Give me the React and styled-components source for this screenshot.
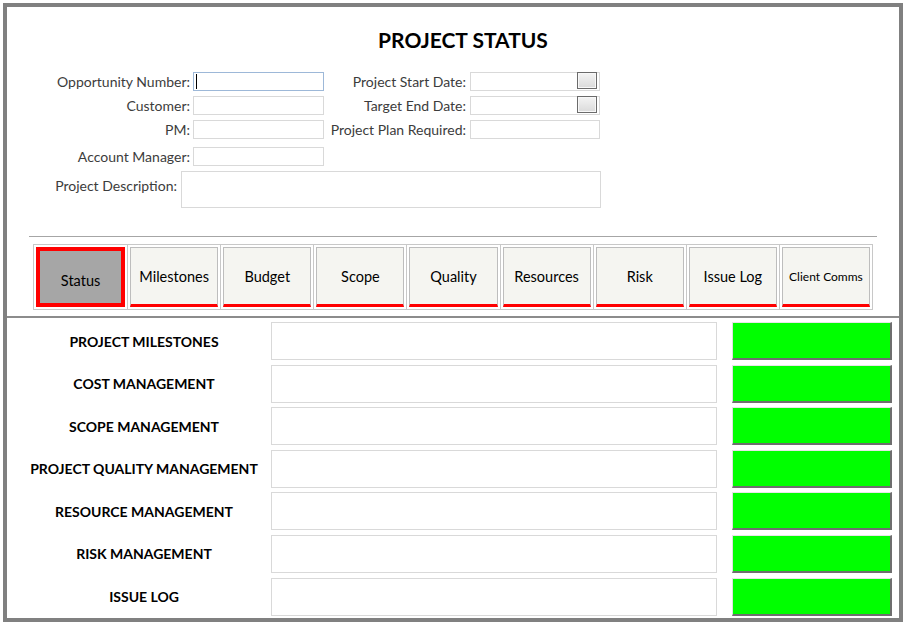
import React from "react";
import styled, { createGlobalStyle } from "styled-components";

const Global = createGlobalStyle`
  html, body { margin: 0; padding: 0; background: #ffffff; }
  body { font-family: "Lato", "Liberation Sans", sans-serif; }
  * { box-sizing: border-box; }
`;

const Frame = styled.div`
  margin: 3px;
  width: 900px;
  height: 619px;
  border: 4px solid #808080;
  background: #fff;
  display: flex;
  flex-direction: column;
`;

const Title = styled.h1`
  margin: 20px 0 0 20px;
  font-size: 21px;
  line-height: 26px;
  font-weight: 700;
  text-align: center;
  color: #000;
`;

const FormGrid = styled.div`
  margin-top: 19px;
  display: grid;
  grid-template-columns: 186px 131px 146px 130px;
  grid-template-rows: 19px 19px 19px 22px;
  row-gap: 5px;
  align-items: end;
`;

const Label = styled.div`
  font-size: 14px;
  color: #3c3c3c;
  text-align: right;
  padding-right: ${(p) => p.$pr || 3}px;
  line-height: 19px;
  height: 19px;
  white-space: nowrap;
`;

const Field = styled.div`
  height: 19px;
  border: 1px solid ${(p) => (p.$focus ? "#9db8d8" : "#d9d9d9")};
  background: #fff;
  display: flex;
  align-items: center;
  justify-content: ${(p) => (p.$picker ? "flex-end" : "flex-start")};
  padding: 0 1px;
`;

const Caret = styled.span`
  width: 1px;
  height: 15px;
  background: #000;
  margin-left: 1px;
`;

const PickerButton = styled.span`
  width: 20px;
  height: 17px;
  margin-top: -1px;
  align-self: flex-start;
  border: 1px solid #6b6b6b;
  box-shadow: inset 0 0 0 1px #f8f8f8;
  background: linear-gradient(#f4f4f4, #dadada);
  margin-right: 1px;
`;

const DescRow = styled.div`
  margin-top: 5px;
  display: flex;
  gap: 4px;
`;

const DescLabel = styled.div`
  width: 170px;
  font-size: 14px;
  color: #3c3c3c;
  text-align: right;
  padding-top: 5px;
  line-height: 19px;
  white-space: nowrap;
`;

const DescBox = styled.div`
  width: 420px;
  height: 37px;
  border: 1px solid #d9d9d9;
`;

const Rule = styled.hr`
  margin: 28px 22px 0;
  border: 0;
  height: 1px;
  background: #a6a6a6;
`;

const TabStrip = styled.div`
  margin: 7px 26px 0;
  border: 1px solid #c8c8c8;
  display: grid;
  grid-template-columns: repeat(9, 1fr);
`;

const TabCell = styled.div`
  padding: 2px;
  border-left: ${(p) => (p.$first ? "none" : "1px solid #c8c8c8")};
`;

const Tab = styled.div`
  height: 60px;
  display: flex;
  align-items: center;
  justify-content: center;
  font-size: ${(p) => (p.$small ? "12px" : "14.5px")};
  color: #000;
  white-space: nowrap;
  background: ${(p) => (p.$active ? "#a6a6a6" : "#f5f5f1")};
  border: ${(p) => (p.$active ? "4px solid #ff0000" : "1px solid #bdbdbd")};
  border-bottom: ${(p) => (p.$active ? "4px solid #ff0000" : "3px solid #ff0000")};
  padding-top: ${(p) => (p.$active ? "6px" : "0")};
`;

const Divider = styled.div`
  margin-top: 6px;
  height: 2px;
  background: #8c8c8c;
`;

const Rows = styled.div`
  padding: 4px 0 0 10px;
  display: grid;
  grid-auto-rows: 38px;
  row-gap: 4.6px;
`;

const Row = styled.div`
  display: flex;
  align-items: stretch;
`;

const RowLabel = styled.div`
  width: 254px;
  display: flex;
  align-items: center;
  justify-content: center;
  font-size: 14px;
  font-weight: 700;
  color: #000;
  white-space: nowrap;
`;

const Notes = styled.div`
  width: 446px;
  border: 1px solid #d9d9d9;
  background: #fff;
`;

const StatusLight = styled.div`
  width: 160px;
  margin-left: 15px;
  background: ${(p) => p.$color};
  border-top: 1px solid #e6e6e6;
  border-left: 1px solid #e0e0e0;
  border-right: 2px solid #6e6e6e;
  border-bottom: 2px solid #6e6e6e;
`;

const tabs = [
  "Status",
  "Milestones",
  "Budget",
  "Scope",
  "Quality",
  "Resources",
  "Risk",
  "Issue Log",
  "Client Comms",
];

const rows = [
  "PROJECT MILESTONES",
  "COST MANAGEMENT",
  "SCOPE MANAGEMENT",
  "PROJECT QUALITY MANAGEMENT",
  "RESOURCE MANAGEMENT",
  "RISK MANAGEMENT",
  "ISSUE LOG",
];

export default function App() {
  return (
    <>
      <Global />
      <Frame>
        <Title>PROJECT STATUS</Title>
        <FormGrid>
          <Label>Opportunity Number:</Label>
          <Field $focus>
            <Caret />
          </Field>
          <Label $pr={4}>Project Start Date:</Label>
          <Field $picker>
            <PickerButton />
          </Field>

          <Label>Customer:</Label>
          <Field />
          <Label $pr={4}>Target End Date:</Label>
          <Field $picker>
            <PickerButton />
          </Field>

          <Label>PM:</Label>
          <Field />
          <Label $pr={4}>Project Plan Required:</Label>
          <Field />

          <Label>Account Manager:</Label>
          <Field />
          <span />
          <span />
        </FormGrid>
        <DescRow>
          <DescLabel>Project Description:</DescLabel>
          <DescBox />
        </DescRow>
        <Rule />
        <TabStrip>
          {tabs.map((t, i) => (
            <TabCell key={t} $first={i === 0}>
              <Tab $active={i === 0} $small={t === "Client Comms"}>
                {t}
              </Tab>
            </TabCell>
          ))}
        </TabStrip>
        <Divider />
        <Rows>
          {rows.map((r) => (
            <Row key={r}>
              <RowLabel>{r}</RowLabel>
              <Notes />
              <StatusLight $color="#00ff00" />
            </Row>
          ))}
        </Rows>
      </Frame>
    </>
  );
}
